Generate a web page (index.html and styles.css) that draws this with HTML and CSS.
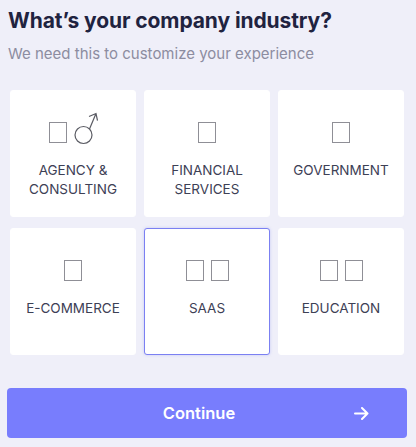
FILE: index.html
```html
<!DOCTYPE html>
<html>
<head>
<meta charset="utf-8">
<link rel="stylesheet" href="styles.css">
</head>
<body>
<div class="page">
  <h1 class="title">What’s your company industry?</h1>
  <p class="subtitle">We need this to customize your experience</p>
  <div class="grid">
    <div class="card">
      <div class="icon"><span class="tofu"></span><svg class="male" width="24" height="34" viewBox="0 0 24 34"><circle cx="9.5" cy="24" r="8.5" fill="none" stroke="#5a5b63" stroke-width="1.2"/><path d="M15.5 18L22 2.5M15 5.5L22 2.5L23.5 9.5" fill="none" stroke="#5a5b63" stroke-width="1.2"/></svg></div>
      <div class="label">AGENCY &amp;<br>CONSULTING</div>
    </div>
    <div class="card">
      <div class="icon"><span class="tofu"></span></div>
      <div class="label">FINANCIAL<br>SERVICES</div>
    </div>
    <div class="card">
      <div class="icon"><span class="tofu"></span></div>
      <div class="label">GOVERNMENT</div>
    </div>
    <div class="card">
      <div class="icon"><span class="tofu"></span></div>
      <div class="label">E-COMMERCE</div>
    </div>
    <div class="card selected">
      <div class="icon"><span class="tofu"></span><span class="tofu"></span></div>
      <div class="label">SAAS</div>
    </div>
    <div class="card">
      <div class="icon"><span class="tofu"></span><span class="tofu"></span></div>
      <div class="label">EDUCATION</div>
    </div>
  </div>
  <button class="continue"><span class="btn-text">Continue</span><span class="arrow">
    <svg width="15" height="13" viewBox="0 0 15 13"><path d="M1 6.5H13.5M8 1L13.5 6.5L8 12" fill="none" stroke="#fff" stroke-width="2" stroke-linecap="round" stroke-linejoin="round"/></svg>
  </span></button>
</div>
</body>
</html>
```
FILE: styles.css
```css
* { box-sizing: border-box; }
html, body { margin: 0; padding: 0; }
body {
  background: #efeff9;
  font-family: Inter, "Liberation Sans", sans-serif;
  width: 416px;
  height: 447px;
  overflow: hidden;
}
.page {
  padding: 8px 9px 0 7px;
}
.title {
  margin: 0;
  font-size: 21px;
  font-weight: 700;
  color: #1f2340;
  letter-spacing: -0.1px;
  line-height: 26px;
  padding-left: 1px;
}
.subtitle {
  margin: 11px 0 0 1px;
  font-size: 15px;
  color: #8c8ca0;
  line-height: 18px;
}
.grid {
  margin-top: 27px;
  margin-left: 3px;
  display: grid;
  grid-template-columns: repeat(3, 126px);
  grid-auto-rows: 127px;
  column-gap: 8px;
  row-gap: 11px;
}
.card {
  background: #fff;
  border-radius: 3px;
  border: 1px solid #fff;
  display: flex;
  flex-direction: column;
  align-items: center;
  padding-top: 23px;
}
.card.selected {
  border-color: #7b80f2;
  box-shadow: 0 0 3px rgba(120,125,240,0.35);
}
.icon {
  height: 32px;
  display: flex;
  align-items: flex-end;
  justify-content: center;
  gap: 7px;
}
.tofu {
  display: inline-block;
  width: 18px;
  height: 21px;
  border: 1px solid #8f8f96;
  margin-bottom: 3px;
}
.male {
  display: block;
  margin-bottom: 1px;
}
.label {
  margin-top: 15px;
  font-size: 13.5px;
  line-height: 19px;
  color: #3d4055;
  text-align: center;
}
.continue {
  margin-top: 33px;
  width: 400px;
  height: 50px;
  border: none;
  border-radius: 4px;
  background: #787dfd;
  color: #fff;
  font-family: Inter, "Liberation Sans", sans-serif;
  font-size: 16.5px;
  font-weight: 600;
  position: relative;
  display: flex;
  align-items: center;
  justify-content: center;
  padding: 0 16px 0 0;
}
.arrow {
  position: absolute;
  right: 38px;
  top: 19px;
  display: flex;
}
```
